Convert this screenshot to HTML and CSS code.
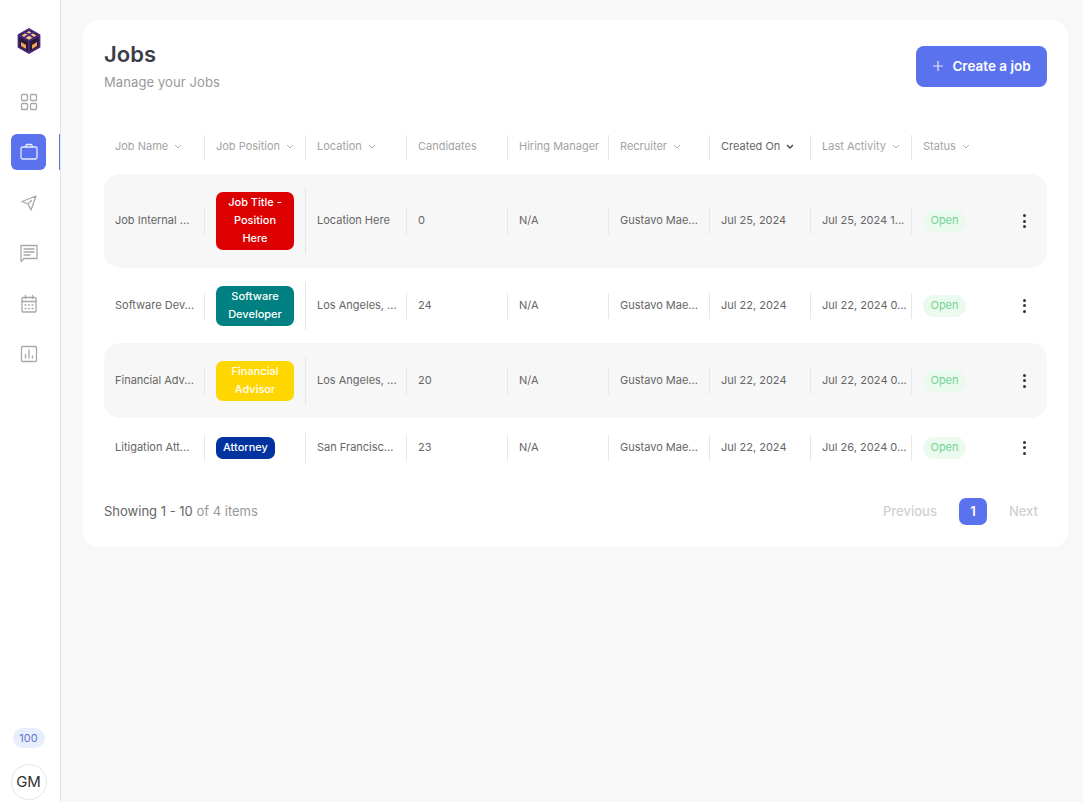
FILE: index.html
```html
<!DOCTYPE html>
<html lang="en">
<head>
<meta charset="utf-8">
<title>Jobs</title>
<link rel="stylesheet" href="styles.css">
</head>
<body>
<div class="app">
  <aside class="sidebar">
    <svg class="logo" viewBox="0 0 24 26" width="24" height="26" aria-label="Logo">
      <path d="M12 1 22.500 7v12L12 25 1.500 19V7Z" fill="#2a1a33"/>
      <path d="M12 3 19.500 7.500 12 12 4.500 7.500Z" fill="#f6c98a"/>
      <path d="M4 14 9 17v4l-5-3ZM20 14l-5 3v4l5-3Z" fill="#efa557"/>
      <path d="M12 1 22.500 7v12L12 25 1.500 19V7ZM1.500 7 12 13 22.500 7M12 13v12M7.500 4 16.500 9.500M16.500 4 7.500 9.500" fill="none" stroke="#4b2a7d" stroke-width="1.800" stroke-linejoin="round"/>
    </svg>
    <nav class="nav">
      <a class="nav-item">
        <svg viewBox="0 0 18 18" width="18" height="18" class="nav-icon"><rect x="1.500" y="1.500" width="6" height="6" rx="1"/><rect x="10.500" y="1.500" width="6" height="6" rx="1"/><rect x="1.500" y="10.500" width="6" height="6" rx="1"/><rect x="10.500" y="10.500" width="6" height="6" rx="1"/></svg>
      </a>
      <a class="nav-item active">
        <svg viewBox="0 0 20 18" width="20" height="18" class="nav-icon"><rect x="2" y="4" width="16" height="12" rx="1.500"/><path d="M7 4V2.500a1 1 0 0 1 1-1h4a1 1 0 0 1 1 1V4"/></svg>
      </a>
      <a class="nav-item">
        <svg viewBox="0 0 18 18" width="18" height="18" class="nav-icon"><path d="M16 2 2 7.500l6 2.500 3 6ZM8 10l3.500-3.500"/></svg>
      </a>
      <a class="nav-item">
        <svg viewBox="0 0 20 20" width="20" height="20" class="nav-icon"><path d="M2 2.500h16v13H5L2 18.500ZM5 6h10M5 9h10M5 12h6"/></svg>
      </a>
      <a class="nav-item">
        <svg viewBox="0 0 18 20" width="18" height="20" class="nav-icon"><rect x="2" y="3.500" width="14" height="14.500" rx="1"/><path d="M2 7.500h14M5.500 1.500v3M12.500 1.500v3M5 11h1M8.500 11h1M12 11h1M5 14.500h1M8.500 14.500h1M12 14.500h1"/></svg>
      </a>
      <a class="nav-item">
        <svg viewBox="0 0 18 18" width="18" height="18" class="nav-icon"><rect x="1.500" y="1.500" width="15" height="15" rx="1"/><path d="M5.500 13V9.500M9 13V5M12.500 13v-2"/></svg>
      </a>
    </nav>
    <div class="side-bottom">
      <span class="credit">100</span>
      <span class="avatar">GM</span>
    </div>
  </aside>

  <main class="main">
    <section class="card">
      <header class="card-head">
        <div>
          <h1 class="title">Jobs</h1>
          <p class="subtitle">Manage your Jobs</p>
        </div>
        <button class="create-btn">
          <svg viewBox="0 0 12 12" width="12" height="12" class="plus"><path d="M6 1v10M1 6h10"/></svg>
          <span class="btn-label">Create a job</span>
        </button>
      </header>

      <div class="table">
        <div class="grid head-row">
          <div class="hcell">Job Name <svg class="chev" viewBox="0 0 8 5"><path d="M1 1l3 3 3-3"/></svg></div>
          <div class="hcell">Job Position <svg class="chev" viewBox="0 0 8 5"><path d="M1 1l3 3 3-3"/></svg></div>
          <div class="hcell">Location <svg class="chev" viewBox="0 0 8 5"><path d="M1 1l3 3 3-3"/></svg></div>
          <div class="hcell">Candidates</div>
          <div class="hcell">Hiring Manager</div>
          <div class="hcell">Recruiter <svg class="chev" viewBox="0 0 8 5"><path d="M1 1l3 3 3-3"/></svg></div>
          <div class="hcell sorted">Created On <svg class="chev" viewBox="0 0 8 5"><path d="M1 1l3 3 3-3"/></svg></div>
          <div class="hcell">Last Activity <svg class="chev" viewBox="0 0 8 5"><path d="M1 1l3 3 3-3"/></svg></div>
          <div class="hcell last">Status <svg class="chev" viewBox="0 0 8 5"><path d="M1 1l3 3 3-3"/></svg></div>
        </div>

        <div class="grid row shaded row-lg">
          <div class="cell">Job Internal ...</div>
          <div class="cell badge-cell"><span class="badge red">Job Title - Position Here</span></div>
          <div class="cell">Location Here</div>
          <div class="cell">0</div>
          <div class="cell">N/A</div>
          <div class="cell">Gustavo Mae...</div>
          <div class="cell">Jul 25, 2024</div>
          <div class="cell">Jul 25, 2024 1...</div>
          <div class="cell last"><span class="pill">Open</span></div>
          <div class="kebab"><i></i><i></i><i></i></div>
        </div>

        <div class="grid row row-md">
          <div class="cell">Software Dev...</div>
          <div class="cell badge-cell"><span class="badge teal">Software Developer</span></div>
          <div class="cell">Los Angeles, ...</div>
          <div class="cell">24</div>
          <div class="cell">N/A</div>
          <div class="cell">Gustavo Mae...</div>
          <div class="cell">Jul 22, 2024</div>
          <div class="cell">Jul 22, 2024 0...</div>
          <div class="cell last"><span class="pill">Open</span></div>
          <div class="kebab"><i></i><i></i><i></i></div>
        </div>

        <div class="grid row shaded row-md">
          <div class="cell">Financial Adv...</div>
          <div class="cell badge-cell"><span class="badge gold">Financial Advisor</span></div>
          <div class="cell">Los Angeles, ...</div>
          <div class="cell">20</div>
          <div class="cell">N/A</div>
          <div class="cell">Gustavo Mae...</div>
          <div class="cell">Jul 22, 2024</div>
          <div class="cell">Jul 22, 2024 0...</div>
          <div class="cell last"><span class="pill">Open</span></div>
          <div class="kebab"><i></i><i></i><i></i></div>
        </div>

        <div class="grid row row-sm">
          <div class="cell">Litigation Att...</div>
          <div class="cell badge-cell"><span class="badge navy">Attorney</span></div>
          <div class="cell">San Francisc...</div>
          <div class="cell">23</div>
          <div class="cell">N/A</div>
          <div class="cell">Gustavo Mae...</div>
          <div class="cell">Jul 22, 2024</div>
          <div class="cell">Jul 26, 2024 0...</div>
          <div class="cell last"><span class="pill">Open</span></div>
          <div class="kebab"><i></i><i></i><i></i></div>
        </div>
      </div>

      <footer class="card-foot">
        <p class="showing">Showing 1 - 10 <span class="muted">of 4 items</span></p>
        <div class="pager">
          <span class="page-link">Previous</span>
          <span class="page-num">1</span>
          <span class="page-link">Next</span>
        </div>
      </footer>
    </section>
  </main>
</div>
</body>
</html>
```

FILE: styles.css
```css
* { box-sizing: border-box; }
html, body { margin: 0; height: 100%; overflow: hidden; }
body {
  background: #f8f8f8;
  font-family: Inter, "Open Sans", "Liberation Sans", sans-serif;
  color: #555;
}
p, h1 { margin: 0; }

.app { display: flex; height: 802px; }

.sidebar {
  width: 61px;
  flex: none;
  background: #fff;
  border-right: 1px solid #e6e6e6;
  display: flex;
  flex-direction: column;
  align-items: center;
  padding: 28px 0 2px;
}
.logo { margin-left: -3px; flex: none; }
.nav {
  margin-top: 30px;
  display: flex;
  flex-direction: column;
  gap: 14.400px;
  width: 100%;
}
.nav-item {
  position: relative;
  width: 35px;
  height: 36px;
  margin-left: 11px;
  border-radius: 6px;
  display: flex;
  align-items: center;
  justify-content: center;
}
.nav-icon { fill: none; stroke: #a8a8a8; stroke-width: 1.300; stroke-linejoin: round; stroke-linecap: round; }
.nav-item.active { background: #5a72ee; }
.nav-item.active .nav-icon { stroke: #e6eaff; }
.nav-item.active::after {
  content: "";
  position: absolute;
  left: 48px;
  top: 0;
  bottom: 0;
  width: 1px;
  background: #5a72ee;
}
.side-bottom {
  margin-top: auto;
  display: flex;
  flex-direction: column;
  align-items: center;
  gap: 16px;
  margin-left: -3px;
}
.credit {
  width: 32px;
  height: 20px;
  border-radius: 10px;
  background: #e9eefd;
  color: #5f75c9;
  font-size: 11px;
  line-height: 20px;
  text-align: center;
}
.avatar {
  width: 36px;
  height: 36px;
  border-radius: 50%;
  border: 1px solid #e5e5e5;
  color: #333;
  font-size: 15px;
  font-weight: 400;
  line-height: 34px;
  text-align: center;
}

.main { flex: 1; padding: 20px 15px 0 22px; min-width: 0; }
.card {
  background: #fff;
  border-radius: 16px;
  padding: 26px 21px 22px;
}
.card-head { display: flex; justify-content: space-between; align-items: flex-start; height: 41px; }
.title {
  font-size: 22px;
  line-height: 28px;
  font-weight: 600;
  color: #3a3d45;
  margin-top: -6px;
}
.subtitle { font-size: 13px; line-height: 20px; color: #999; margin-top: 4px; letter-spacing: .1px; }
.create-btn {
  width: 131px;
  height: 41px;
  border: 0;
  border-radius: 8px;
  background: #5a72ee;
  color: #fff;
  font: 600 13.500px Inter, "Open Sans", sans-serif;
  display: flex;
  align-items: center;
  justify-content: center;
  gap: 8px;
  padding: 0 0 2px;
}
.plus { fill: none; stroke: #dfe4ff; stroke-width: 1.200; }

.table { margin-top: 48px; }
.grid {
  display: grid;
  grid-template-columns: repeat(8, 101px) 1fr 46px;
  align-items: center;
}
.head-row { height: 25px; margin-bottom: 14px; }
.hcell {
  height: 25px;
  padding: 0 4px 0 11px;
  border-right: 1px solid #e6e6e6;
  font-size: 11px;
  line-height: 23px;
  color: #a3a3a3;
  white-space: nowrap;
}
.hcell.sorted { color: #666; }
.hcell.last, .cell.last { border-right: 0; }
.chev { width: 8px; height: 5px; margin-left: 3px; vertical-align: 1px; fill: none; stroke: #b0b0b0; stroke-width: 1; }
.sorted .chev { stroke: #444; stroke-width: 1.300; }

.row { border-radius: 16px; }
.row-lg { height: 94px; }
.row-md { height: 75px; }
.row-sm { height: 59px; }
.shaded { background: #f7f7f7; }
.cell {
  padding: 4px 4px 6px 11px;
  border-right: 1px solid #e6e6e6;
  font-size: 11px;
  line-height: 16px;
  color: #666;
  white-space: nowrap;
}
.cell.last { padding: 0 0 0 11px; }
.badge-cell { padding: 4px 11px; white-space: normal; line-height: 0; }
.badge {
  display: inline-block;
  padding: 1px 7px 3px;
  border-radius: 7px;
  color: #fff;
  font-size: 11px;
  font-weight: 500;
  line-height: 18px;
  text-align: center;
}
.red { background: #dd0000; width: 78px; }
.teal { background: #008080; width: 78px; }
.gold { background: #ffd700; width: 78px; }
.navy { background: #0033a0; }
.pill {
  display: inline-block;
  width: 43px;
  height: 22px;
  border-radius: 11px;
  background: #ebfaee;
  color: #74d38f;
  font-size: 11px;
  line-height: 21px;
  text-align: center;
}
.kebab { display: flex; flex-direction: column; align-items: center; gap: 2.500px; }
.kebab i { width: 3px; height: 3px; border-radius: 50%; background: #333; }

.card-foot {
  margin-top: 21px;
  height: 27px;
  display: flex;
  justify-content: space-between;
  align-items: center;
}
.showing { font-size: 13px; color: #666; padding-bottom: 2px; }
.muted { color: #999; }
.pager { display: flex; align-items: center; gap: 22px; padding-right: 9px; }
.page-link { font-size: 13px; font-weight: 500; color: #d0d0d0; padding-bottom: 2px; }
.page-num {
  width: 28px;
  height: 27px;
  border-radius: 7px;
  background: #5a72ee;
  color: #fff;
  font-size: 13px;
  font-weight: 600;
  line-height: 26px;
  text-align: center;
}
```
